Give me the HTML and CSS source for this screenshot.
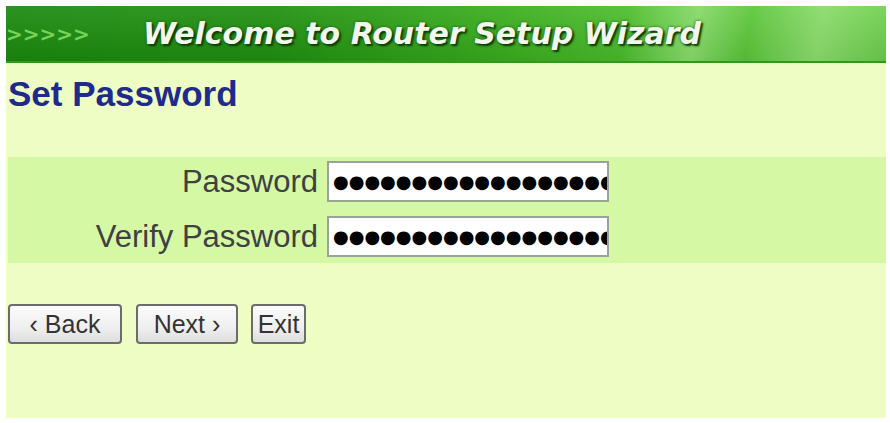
FILE: index.html
```html
<!DOCTYPE html>
<html>
<head>
<meta charset="utf-8">
<link rel="stylesheet" href="styles.css">
</head>
<body>
<div class="page">
  <div class="banner">
    <span class="arrows">&gt;&gt;&gt;&gt;&gt;</span>
    <span class="title">Welcome to Router Setup Wizard</span>
  </div>
  <div class="content">
    <h1 class="heading">Set Password</h1>
    <div class="fields">
      <div class="row">
        <label class="label">Password</label>
        <div class="field"><span class="dots">●●●●●●●●●●●●●●●●●●●●●●</span></div>
      </div>
      <div class="row">
        <label class="label">Verify Password</label>
        <div class="field"><span class="dots">●●●●●●●●●●●●●●●●●●●●●●</span></div>
      </div>
    </div>
    <div class="buttons">
      <button class="btn btn-back">&lsaquo; Back</button>
      <button class="btn btn-next">Next &rsaquo;</button>
      <button class="btn btn-exit">Exit</button>
    </div>
  </div>
</div>
</body>
</html>
```
FILE: styles.css
```css
html, body {
  margin: 0;
  padding: 0;
  background: #ffffff;
}
.page {
  width: 880px;
  height: 412px;
  margin: 6px 0 0 6px;
  display: flex;
  flex-direction: column;
  background: #eefdc3;
}
.banner {
  height: 57px;
  display: flex;
  align-items: center;
  background:
    linear-gradient(100deg, rgba(255,255,255,0) 70%, rgba(220,255,200,0.35) 78%, rgba(255,255,255,0) 84%, rgba(220,255,200,0.3) 92%, rgba(255,255,255,0) 100%),
    linear-gradient(180deg, rgba(255,255,255,0.08) 0%, rgba(0,0,0,0.08) 100%),
    linear-gradient(90deg, #1a8a0e 0%, #1f900f 30%, #38ac1c 55%, #52c230 75%, #6ccf4a 100%);
  border-bottom: 2px solid #2f9a14;
  box-sizing: border-box;
}
.arrows {
  font-family: "DejaVu Sans", sans-serif;
  font-weight: bold;
  font-size: 20px;
  color: #86e066;
  opacity: 0.85;
  width: 137px;
}
.title {
  font-family: "DejaVu Sans", sans-serif;
  font-weight: bold;
  font-style: italic;
  font-size: 30px;
  color: #f2f7ec;
  text-shadow: 2px 2px 2px #0b3d05, 0 0 3px #1a5a0a;
  white-space: nowrap;
}
.content {
  flex: 1;
  display: flex;
  flex-direction: column;
}
.heading {
  margin: 11px 0 0 2px;
  font-family: "Liberation Sans", Arial, sans-serif;
  font-weight: bold;
  font-size: 35px;
  line-height: 40px;
  color: #1e2a8c;
}
.fields {
  margin-top: 43px;
  margin-left: 2px;
  padding: 4px 0 6px 0;
  background: #d4f8a4;
  display: flex;
  flex-direction: column;
  gap: 14px;
}
.row {
  display: grid;
  grid-template-columns: 310px 282px;
  column-gap: 9px;
  align-items: center;
}
.label {
  text-align: right;
  font-family: "Liberation Sans", Arial, sans-serif;
  font-size: 31px;
  color: #404040;
}
.field {
  height: 41px;
  box-sizing: border-box;
  border: 2px solid #9aa59a;
  background: #ffffff;
  overflow: hidden;
  white-space: nowrap;
  display: flex;
  align-items: center;
  padding-left: 4px;
}
.dots {
  font-family: "DejaVu Sans", sans-serif;
  font-size: 18px;
  color: #000000;
}
.buttons {
  margin-top: 41px;
  margin-left: 2px;
  display: flex;
  gap: 14px;
}
.btn {
  height: 40px;
  box-sizing: border-box;
  border: 2px solid #6c6c6c;
  border-radius: 4px;
  background: linear-gradient(180deg, #fbfbfb 0%, #efefef 60%, #dedede 100%);
  font-family: "Liberation Sans", Arial, sans-serif;
  font-size: 25px;
  color: #333333;
  padding: 0;
}
.btn-back { width: 114px; }
.btn-next { width: 102px; }
.btn-exit { width: 55px; margin-left: -1px; }
```
